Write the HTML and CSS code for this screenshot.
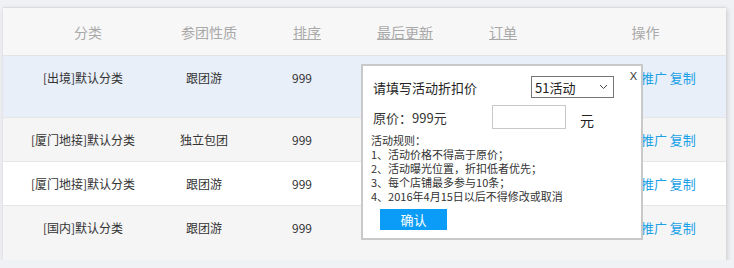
FILE: index.html
```html
<!DOCTYPE html>
<html>
    <head>
        <meta charset="utf-8">
        <title>分类管理</title>
        <link rel="stylesheet" href="styles.css">
    </head>
    <body>
        <div class="page">
            <div class="card">
                <table>
                    <colgroup>
                        <col style="width:160px">
                        <col style="width:82px">
                        <col style="width:114px">
                        <col style="width:82px">
                        <col style="width:114px">
                        <col>
                    </colgroup>
                    <thead>
                        <tr>
                            <th>分类</th>
                            <th>参团性质</th>
                            <th><a href="#">排序</a></th>
                            <th><a href="#">最后更新</a></th>
                            <th><a href="#">订单</a></th>
                            <th>操作</th>
                        </tr>
                    </thead>
                    <tbody>
                        <tr class="active">
                            <td>[出境]默认分类</td>
                            <td>跟团游</td>
                            <td>999</td>
                            <td></td>
                            <td></td>
                            <td class="ops"><a href="#">推广</a> <a href="#">复制</a></td>
                        </tr>
                        <tr class="gray">
                            <td>[厦门地接]默认分类</td>
                            <td>独立包团</td>
                            <td>999</td>
                            <td></td>
                            <td></td>
                            <td class="ops"><a href="#">推广</a> <a href="#">复制</a></td>
                        </tr>
                        <tr>
                            <td>[厦门地接]默认分类</td>
                            <td>跟团游</td>
                            <td>999</td>
                            <td></td>
                            <td></td>
                            <td class="ops"><a href="#">推广</a> <a href="#">复制</a></td>
                        </tr>
                        <tr class="gray last">
                            <td>[国内]默认分类</td>
                            <td>跟团游</td>
                            <td>999</td>
                            <td></td>
                            <td></td>
                            <td class="ops"><a href="#">推广</a> <a href="#">复制</a></td>
                        </tr>
                    </tbody>
                </table>
            </div>

            <div class="popup">
                <div class="close">X</div>
                <div class="line title">
                    <span class="label">请填写活动折扣价</span>
                    <div class="select">
                        <select>
                            <option>51活动</option>
                        </select>
                        <svg width="9" height="6" viewBox="0 0 9 6"><path d="M1 1 L4.5 4.5 L8 1" fill="none" stroke="#444" stroke-width="1"/></svg>
                    </div>
                </div>
                <div class="line price">
                    <span class="origin">原价：999元</span>
                    <input type="text">
                    <span class="yuan">元</span>
                </div>
                <div class="rules">
                    <p>活动规则：</p>
                    <p>1、活动价格不得高于原价；</p>
                    <p>2、活动曝光位置，折扣低者优先；</p>
                    <p>3、每个店铺最多参与10条；</p>
                    <p>4、2016年4月15日以后不得修改或取消</p>
                </div>
                <button>确认</button>
            </div>
        </div>
    </body>
</html>
```

FILE: styles.css
```css
body{
    margin: 0;
    background: #eff1f4;
    font-family: "Microsoft YaHei", "Noto Sans CJK SC", "Noto Sans", sans-serif;
    font-size: 12px;
    color: #333;
}
.page{
    position: relative;
    padding: 7px 8px 0 3px;
}
.card{
    width: 723px;
    height: 252px;
    background: #f5f5f5;
    border-top: 1px solid #dcdcdc;
    box-shadow: 1px 2px 5px rgba(0,0,0,0.18);
}
table{
    width: 100%;
    border-collapse: collapse;
    table-layout: fixed;
    font-size: 12px;
}
th{
    height: 47px;
    padding: 0 0 0 10px;
    background: #f7f7f7;
    color: #a9a9a9;
    font-weight: normal;
    font-size: 14px;
    text-align: center;
    border-bottom: 1px solid #e3e3e3;
}
th a{
    color: #a9a9a9;
    text-decoration: underline;
}
td{
    height: 44px;
    padding: 13px 0 0 0;
    box-sizing: border-box;
    vertical-align: top;
    text-align: center;
    line-height: 17px;
    border-bottom: 1px solid #e6e6e6;
    background: #fff;
}
tr.gray td{
    background: #f5f5f5;
}
tr.active td{
    height: 62px;
    background: #e8eff9;
}
tr.last td{
    border-bottom: none;
}
td.ops{
    text-align: left;
    padding-left: 86px;
}
.ops a{
    color: #1aa0e6;
    font-size: 13px;
    text-decoration: none;
}
.popup{
    position: absolute;
    left: 361px;
    top: 64px;
    width: 278px;
    height: 172px;
    background: #fff;
    border: 2px solid #c9c9c9;
}
.close{
    position: absolute;
    right: 4px;
    top: 4px;
    font-size: 11px;
    line-height: 12px;
    color: #333;
    font-family: "Liberation Sans", sans-serif;
}
.line{
    display: flex;
    align-items: center;
    padding-left: 10px;
}
.title{
    margin-top: 10px;
    height: 22px;
    font-size: 13px;
    color: #222;
}
.label{
    width: 158px;
}
.select{
    position: relative;
    width: 83px;
    height: 22px;
}
.select select{
    appearance: none;
    -webkit-appearance: none;
    width: 83px;
    height: 22px;
    font-size: 13px;
    font-family: "Microsoft YaHei", "Noto Sans CJK SC", sans-serif;
    border: 1px solid #767676;
    border-radius: 0;
    background: #fff;
    color: #222;
    padding: 0 3px;
    outline: none;
}
.select svg{
    position: absolute;
    right: 6px;
    top: 8px;
}
.price{
    margin-top: 7px;
    height: 24px;
    font-size: 13px;
}
.origin{
    width: 119px;
    color: #333;
}
.price input{
    width: 74px;
    height: 24px;
    box-sizing: border-box;
    border: 1px solid #c8c8c8;
    outline: none;
}
.yuan{
    margin-left: 14px;
    margin-top: 6px;
    font-size: 14px;
    color: #222;
}
.rules{
    margin-top: 4px;
    padding-left: 8px;
    font-size: 11px;
    color: #333;
}
.rules p{
    margin: 0;
    line-height: 14px;
}
button{
    display: block;
    margin: 6px 0 0 17px;
    width: 67px;
    height: 21px;
    border: none;
    background: #0b9cf7;
    color: #fff;
    font-size: 13px;
    font-family: "Microsoft YaHei", "Noto Sans CJK SC", sans-serif;
    padding: 0;
}
```
